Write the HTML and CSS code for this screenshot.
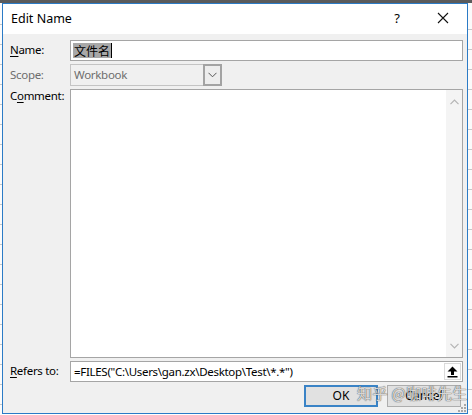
FILE: index.html
```html
<!DOCTYPE html>
<html>
<head>
<meta charset="utf-8">
<link rel="stylesheet" href="styles.css">
</head>
<body>
<div class="screen">
  <div class="topbar"></div>
  <div class="row">
    <div class="sheet sheet-left"></div>
    <div class="dialog">
      <div class="titlebar">
        <span class="title">Edit Name</span>
        <span class="help">?</span>
        <span class="close">
          <svg width="12" height="12" viewBox="0 0 12 12"><path d="M1 1 L11 11 M11 1 L1 11" stroke="#111" stroke-width="1.1" fill="none"/></svg>
        </span>
      </div>
      <div class="body">
        <div class="form">
          <label class="lbl"><u>N</u>ame:</label>
          <div class="field"><span class="sel">文件名</span><span class="caret"></span></div>

          <label class="lbl dim">Scope:</label>
          <div class="select">
            <span class="select-text">Workbook</span>
            <span class="drop">
              <svg width="9" height="6" viewBox="0 0 9 6"><path d="M0.5 0.8 L4.5 4.8 L8.5 0.8" stroke="#555" stroke-width="1" fill="none"/></svg>
            </span>
          </div>

          <label class="lbl top">C<u>o</u>mment:</label>
          <div class="memo">
            <div class="memo-text"></div>
            <div class="vscroll">
              <svg width="9" height="6" viewBox="0 0 9 6"><path d="M0.5 5.2 L4.5 1.2 L8.5 5.2" stroke="#b4b4b4" stroke-width="1.2" fill="none"/></svg>
              <svg width="9" height="6" viewBox="0 0 9 6"><path d="M0.5 0.8 L4.5 4.8 L8.5 0.8" stroke="#b4b4b4" stroke-width="1.2" fill="none"/></svg>
            </div>
          </div>

          <label class="lbl"><u>R</u>efers to:</label>
          <div class="field refers">
            <span class="refers-text">=FILES("C:\Users\gan.zx\Desktop\Test\*.*")</span>
            <span class="collapse">
              <svg width="11" height="12" viewBox="0 0 11 12"><path d="M5.5 0.5 L10.5 5.5 L7 5.5 L7 9 L4 9 L4 5.5 L0.5 5.5 Z" fill="#000"/><rect x="0.5" y="10" width="10" height="1.5" fill="#000"/></svg>
            </span>
          </div>
        </div>

        <div class="actions">
          <button class="btn ok">OK</button>
          <button class="btn">Cancel</button>
        </div>

        <div class="watermark">知乎 @咖啡先生</div>
        <svg class="grip" width="11" height="11" viewBox="0 0 11 11">
          <g fill="#a8a8a8">
            <rect x="8" y="2" width="2" height="2"/>
            <rect x="5" y="5" width="2" height="2"/><rect x="8" y="5" width="2" height="2"/>
            <rect x="2" y="8" width="2" height="2"/><rect x="5" y="8" width="2" height="2"/><rect x="8" y="8" width="2" height="2"/>
          </g>
        </svg>
      </div>
    </div>
    <div class="sheet sheet-right"></div>
  </div>
</div>
</body>
</html>
```

FILE: styles.css
```css
html, body {
  margin: 0;
  padding: 0;
}

body {
  width: 472px;
  height: 415px;
  overflow: hidden;
  background: #ffffff;
  font-family: "Noto Sans", "Open Sans", "Noto Sans CJK SC", sans-serif;
  font-size: 11.5px;
  letter-spacing: -0.3px;
  color: #000;
}

.screen {
  width: 472px;
  height: 415px;
  display: flex;
  flex-direction: column;
}

.topbar {
  height: 3px;
  background: #5b5b5b;
  flex: none;
}

.row {
  display: flex;
  flex: 1;
  align-items: flex-start;
}

/* spreadsheet rows peeking out around the dialog */
.sheet {
  align-self: stretch;
  background-color: #fbfbfb;
  background-image: repeating-linear-gradient(to bottom, transparent 0, transparent 19px, #c8c8c8 19px, #c8c8c8 20px);
  background-position: 0 2px;
}

.sheet-left {
  width: 2px;
}

.sheet-right {
  flex: 1;
  background-position: 0 7px;
}

.dialog {
  width: 464px;
  height: 409px;
  border: 1px solid #2b7bc6;
  background: #f0f0f0;
  display: flex;
  flex-direction: column;
}

.titlebar {
  height: 30px;
  background: #ffffff;
  display: flex;
  align-items: center;
  flex: none;
}

.title {
  margin-left: 8px;
  font-size: 12.5px;
  letter-spacing: 0;
  flex: 1;
  padding-bottom: 1px;
}

.help {
  font-size: 13px;
  width: 12px;
  text-align: center;
  margin-right: 34px;
  padding-bottom: 2px;
}

.close {
  width: 12px;
  height: 12px;
  margin-right: 18px;
  margin-bottom: 2px;
  display: flex;
}

.body {
  position: relative;
  flex: 1;
  padding: 6px 4px 0 7px;
}

.form {
  display: grid;
  grid-template-columns: 60px 1fr;
  grid-template-rows: 21px 22px 269px 21px;
  row-gap: 3px;
}

.lbl {
  display: flex;
  align-items: center;
  padding-bottom: 2px;
  white-space: nowrap;
}

.lbl u {
  text-decoration-thickness: 1px;
  text-underline-offset: 2px;
}

.lbl.dim {
  color: #6d6d6d;
}

.lbl.top {
  align-items: flex-start;
  margin-top: -1px;
}

.field {
  box-sizing: border-box;
  border: 1px solid #a5a5a5;
  background: #ffffff;
  display: flex;
  align-items: center;
  padding-left: 2px;
}

.sel {
  background: #a8a8a8;
  font-family: "Noto Sans CJK SC", sans-serif;
  font-size: 12px;
  letter-spacing: 0;
  line-height: 15px;
  padding: 0 1px;
}

.caret {
  width: 1px;
  height: 15px;
  background: #000;
}

.select {
  box-sizing: border-box;
  width: 152px;
  border: 1px solid #c4c4c4;
  background: #f0f0f0;
  display: flex;
  align-items: stretch;
}

.select-text {
  flex: 1;
  color: #6d6d6d;
  display: flex;
  align-items: center;
  padding-left: 3px;
  padding-bottom: 1px;
}

.drop {
  width: 15px;
  border: 2px solid #a3a3a3;
  background: #ededed;
  display: flex;
  align-items: center;
  justify-content: center;
  margin: -1px -1px -1px 0;
}

.memo {
  box-sizing: border-box;
  border: 1px solid #a5a5a5;
  background: #ffffff;
  display: flex;
}

.memo-text {
  flex: 1;
}

.vscroll {
  width: 16px;
  background: #f4f4f4;
  display: flex;
  flex-direction: column;
  justify-content: space-between;
  align-items: center;
  padding: 9px 0 8px;
}

.refers {
  padding-left: 3px;
  padding-right: 1px;
}

.refers-text {
  flex: 1;
  white-space: nowrap;
  padding-bottom: 1px;
}

.collapse {
  width: 17px;
  height: 17px;
  box-sizing: border-box;
  border: 1px solid #dadada;
  background: #fdfdfd;
  display: flex;
  align-items: center;
  justify-content: center;
}

.actions {
  display: flex;
  justify-content: flex-end;
  gap: 9px;
  margin-top: 3px;
  padding-right: 2px;
}

.btn {
  box-sizing: border-box;
  width: 74px;
  height: 22px;
  background: #e1e1e1;
  border: 1px solid #adadad;
  font: inherit;
  font-size: 12px;
  letter-spacing: 0;
  color: #000;
  padding: 0 0 1px;
  margin: 0;
}

.btn.ok {
  border: 2px solid #3a83c6;
}

/* site watermark stamped over the button row */
.watermark {
  position: absolute;
  left: 354px;
  top: 348px;
  font-family: "Noto Sans CJK SC", sans-serif;
  font-size: 15px;
  letter-spacing: 0.4px;
  color: rgba(255, 255, 255, 0.8);
  text-shadow: 0 0 1px rgba(60, 60, 60, 0.95), 0 0 1px rgba(60, 60, 60, 0.7);
  white-space: nowrap;
}

.grip {
  position: absolute;
  right: 0;
  bottom: 0;
}
```
